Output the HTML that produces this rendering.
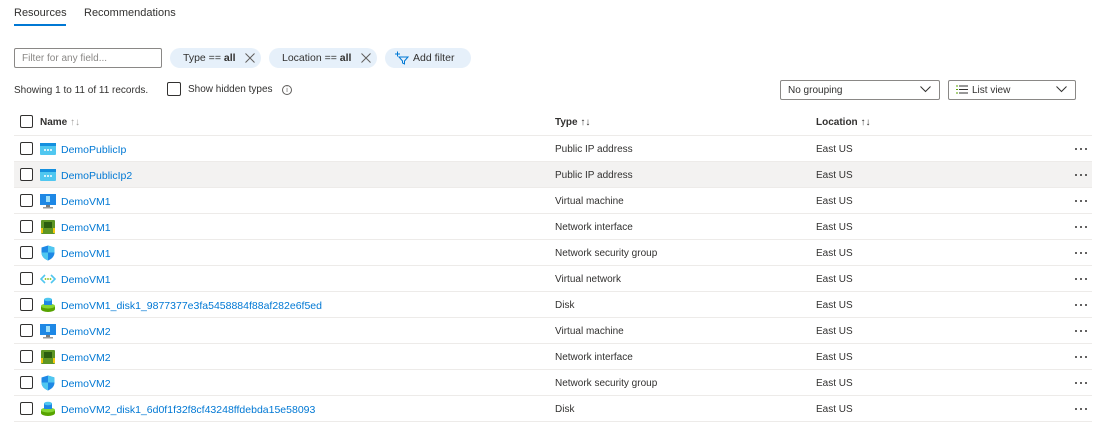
<!DOCTYPE html>
<html><head><meta charset="utf-8"><style>
*{box-sizing:border-box;margin:0;padding:0}
body{width:1096px;height:429px;background:#fff;font-family:"Liberation Sans",sans-serif;font-size:10px;color:#323130;position:relative;overflow:hidden}
.a{position:absolute;white-space:nowrap}
.cb{position:absolute;width:13px;height:13px;border:1px solid #323130;border-radius:2px;background:#fff}
.pill{position:absolute;top:48px;height:20px;border-radius:10px;background:#e6f0fa;line-height:20px;font-size:10.5px}
.row{position:absolute;left:14px;width:1078px;height:26px;border-bottom:1px solid #edebe9}
.row .cb{left:6px;top:6px}
.row .ic{position:absolute;left:26px;top:5px;width:16px;height:16px}
.row .n{position:absolute;left:47px;top:8px;color:#0078d4;font-size:10.5px}
.row .t{position:absolute;left:541px;top:8px}
.row .l{position:absolute;left:802px;top:8px}
.row .d{position:absolute;left:1061px;top:12px;width:14px;height:4px}
.row .d i{position:absolute;top:0;width:2px;height:2px;border-radius:1px;background:#323130}
.dd{position:absolute;top:80px;height:20px;border:1px solid #8a8886;border-radius:2px;line-height:19px;padding-left:7px}
</style></head><body>
<div class="a" style="left:14px;top:7px;font-size:11px;color:#323130">Resources</div>
<div class="a" style="left:14px;top:24px;width:52px;height:2px;background:#0078d4"></div>
<div class="a" style="left:84px;top:7px;font-size:11px">Recommendations</div>
<div class="a" style="left:14px;top:48px;width:148px;height:20px;border:1px solid #8a8886;border-radius:2px;color:#8a8886;padding-left:7px;line-height:19px">Filter for any field...</div>
<div class="pill" style="left:170px;width:91px;padding-left:13px">Type == <b>all</b><svg style="position:absolute;left:75px;top:5px" width="10" height="10"><path d="M0.5 0.5l9 9M9.5 0.5l-9 9" stroke="#605e5c"/></svg></div>
<div class="pill" style="left:269px;width:108px;padding-left:13px">Location == <b>all</b><svg style="position:absolute;left:92px;top:5px" width="10" height="10"><path d="M0.5 0.5l9 9M9.5 0.5l-9 9" stroke="#605e5c"/></svg></div>
<div class="pill" style="left:385px;width:86px;padding-left:28px">Add filter
<svg style="position:absolute;left:9px;top:3px" width="16" height="14" viewBox="0 0 16 14"><path d="M1 3h5M3.5 0.5v5" stroke="#0078d4" fill="none"/><path d="M5 6h9l-3.5 4v3l-2-1v-2z" stroke="#0078d4" fill="none"/></svg></div>
<div class="a" style="left:14px;top:85px">Showing 1 to 11 of 11 records.</div>
<div class="cb" style="left:167px;top:82px;width:14px;height:14px"></div>
<div class="a" style="left:188px;top:84px">Show hidden types</div>
<div class="a" style="left:282px;top:85px;width:10px;height:10px;border:1px solid #605e5c;border-radius:50%;font-size:7px;text-align:center;line-height:9px;color:#605e5c">i</div>
<div class="dd" style="left:780px;width:160px">No grouping<svg style="position:absolute;right:8px;top:5px" width="11" height="7"><path d="M0.5 0.5l5 5 5-5" stroke="#323130" fill="none"/></svg></div>
<div class="dd" style="left:948px;width:128px;padding-left:23px"><svg style="position:absolute;left:7px;top:4px" width="12" height="9"><path d="M0 1h2M0 4.5h2M0 8h2" stroke="#57a300"/><path d="M3 1h9M3 4.5h9M3 8h9" stroke="#323130"/></svg>List view<svg style="position:absolute;right:8px;top:5px" width="11" height="7"><path d="M0.5 0.5l5 5 5-5" stroke="#323130" fill="none"/></svg></div>
<div class="a" style="left:14px;top:110px;width:1078px;height:26px;border-bottom:1px solid #edebe9">
<div class="cb" style="left:6px;top:5px"></div>
<div class="a" style="left:26px;top:7px;font-weight:bold">Name <span style="font-weight:normal;color:#a19f9d">↑↓</span></div>
<div class="a" style="left:541px;top:7px;font-weight:bold">Type <span style="font-weight:normal">↑↓</span></div>
<div class="a" style="left:802px;top:7px;font-weight:bold">Location <span style="font-weight:normal">↑↓</span></div>
</div>
<div class="row" style="top:136px"><div class="cb"></div><svg class="ic" viewBox="0 0 16 16"><rect x="0" y="2" width="16" height="12" rx="1" fill="#50c7f0"/><rect x="0" y="2" width="16" height="3" fill="#1490df"/><circle cx="5" cy="9" r="1" fill="#fff"/><circle cx="8" cy="9" r="1" fill="#fff"/><circle cx="11" cy="9" r="1" fill="#fff"/></svg><div class="n">DemoPublicIp</div><div class="t">Public IP address</div><div class="l">East US</div><div class="d"><i style="left:0"></i><i style="left:5px"></i><i style="left:10px"></i></div></div>
<div class="row" style="top:162px;background:#f3f2f1"><div class="cb"></div><svg class="ic" viewBox="0 0 16 16"><rect x="0" y="2" width="16" height="12" rx="1" fill="#50c7f0"/><rect x="0" y="2" width="16" height="3" fill="#1490df"/><circle cx="5" cy="9" r="1" fill="#fff"/><circle cx="8" cy="9" r="1" fill="#fff"/><circle cx="11" cy="9" r="1" fill="#fff"/></svg><div class="n">DemoPublicIp2</div><div class="t">Public IP address</div><div class="l">East US</div><div class="d"><i style="left:0"></i><i style="left:5px"></i><i style="left:10px"></i></div></div>
<div class="row" style="top:188px"><div class="cb"></div><svg class="ic" viewBox="0 0 16 16"><rect x="0" y="1" width="16" height="11" fill="#1e88e5"/><rect x="6" y="3" width="4" height="6" fill="#9fe0fa"/><rect x="6" y="12" width="4" height="2" fill="#7a7a7a"/><rect x="3" y="14" width="10" height="1.5" fill="#999"/></svg><div class="n">DemoVM1</div><div class="t">Virtual machine</div><div class="l">East US</div><div class="d"><i style="left:0"></i><i style="left:5px"></i><i style="left:10px"></i></div></div>
<div class="row" style="top:214px"><div class="cb"></div><svg class="ic" viewBox="0 0 16 16"><rect x="1" y="1" width="14" height="14" rx="1" fill="#5e9624"/><rect x="4" y="3" width="8" height="6" fill="#2b5e0f"/><rect x="1" y="9" width="2" height="5" fill="#f2c811"/><rect x="13" y="9" width="2" height="5" fill="#f2c811"/></svg><div class="n">DemoVM1</div><div class="t">Network interface</div><div class="l">East US</div><div class="d"><i style="left:0"></i><i style="left:5px"></i><i style="left:10px"></i></div></div>
<div class="row" style="top:240px"><div class="cb"></div><svg class="ic" viewBox="0 0 16 16"><path d="M8 0.5l6.5 2v5c0 4-3 6.5-6.5 8-3.5-1.5-6.5-4-6.5-8v-5z" fill="#1e88e5"/><path d="M8 0.5l6.5 2v5H8z M8 7.5h-6.5c0 4 3 6.5 6.5 8z" fill="#50c7f0"/></svg><div class="n">DemoVM1</div><div class="t">Network security group</div><div class="l">East US</div><div class="d"><i style="left:0"></i><i style="left:5px"></i><i style="left:10px"></i></div></div>
<div class="row" style="top:266px"><div class="cb"></div><svg class="ic" viewBox="0 0 16 16"><path d="M5 4L1 8l4 4M11 4l4 4-4 4" stroke="#50c7f0" stroke-width="1.6" fill="none"/><circle cx="5.5" cy="8" r="0.9" fill="#7fba00"/><circle cx="8" cy="8" r="0.9" fill="#7fba00"/><circle cx="10.5" cy="8" r="0.9" fill="#7fba00"/></svg><div class="n">DemoVM1</div><div class="t">Virtual network</div><div class="l">East US</div><div class="d"><i style="left:0"></i><i style="left:5px"></i><i style="left:10px"></i></div></div>
<div class="row" style="top:292px"><div class="cb"></div><svg class="ic" viewBox="0 0 16 16"><ellipse cx="8" cy="12" rx="7" ry="3" fill="#57a300"/><rect x="1" y="9" width="14" height="3" fill="#57a300"/><ellipse cx="8" cy="9" rx="7" ry="2.5" fill="#86d633"/><rect x="4" y="2" width="8" height="6" fill="#1e88e5"/><ellipse cx="8" cy="2.5" rx="4" ry="1.8" fill="#50c7f0"/></svg><div class="n">DemoVM1_disk1_9877377e3fa5458884f88af282e6f5ed</div><div class="t">Disk</div><div class="l">East US</div><div class="d"><i style="left:0"></i><i style="left:5px"></i><i style="left:10px"></i></div></div>
<div class="row" style="top:318px"><div class="cb"></div><svg class="ic" viewBox="0 0 16 16"><rect x="0" y="1" width="16" height="11" fill="#1e88e5"/><rect x="6" y="3" width="4" height="6" fill="#9fe0fa"/><rect x="6" y="12" width="4" height="2" fill="#7a7a7a"/><rect x="3" y="14" width="10" height="1.5" fill="#999"/></svg><div class="n">DemoVM2</div><div class="t">Virtual machine</div><div class="l">East US</div><div class="d"><i style="left:0"></i><i style="left:5px"></i><i style="left:10px"></i></div></div>
<div class="row" style="top:344px"><div class="cb"></div><svg class="ic" viewBox="0 0 16 16"><rect x="1" y="1" width="14" height="14" rx="1" fill="#5e9624"/><rect x="4" y="3" width="8" height="6" fill="#2b5e0f"/><rect x="1" y="9" width="2" height="5" fill="#f2c811"/><rect x="13" y="9" width="2" height="5" fill="#f2c811"/></svg><div class="n">DemoVM2</div><div class="t">Network interface</div><div class="l">East US</div><div class="d"><i style="left:0"></i><i style="left:5px"></i><i style="left:10px"></i></div></div>
<div class="row" style="top:370px"><div class="cb"></div><svg class="ic" viewBox="0 0 16 16"><path d="M8 0.5l6.5 2v5c0 4-3 6.5-6.5 8-3.5-1.5-6.5-4-6.5-8v-5z" fill="#1e88e5"/><path d="M8 0.5l6.5 2v5H8z M8 7.5h-6.5c0 4 3 6.5 6.5 8z" fill="#50c7f0"/></svg><div class="n">DemoVM2</div><div class="t">Network security group</div><div class="l">East US</div><div class="d"><i style="left:0"></i><i style="left:5px"></i><i style="left:10px"></i></div></div>
<div class="row" style="top:396px"><div class="cb"></div><svg class="ic" viewBox="0 0 16 16"><ellipse cx="8" cy="12" rx="7" ry="3" fill="#57a300"/><rect x="1" y="9" width="14" height="3" fill="#57a300"/><ellipse cx="8" cy="9" rx="7" ry="2.5" fill="#86d633"/><rect x="4" y="2" width="8" height="6" fill="#1e88e5"/><ellipse cx="8" cy="2.5" rx="4" ry="1.8" fill="#50c7f0"/></svg><div class="n">DemoVM2_disk1_6d0f1f32f8cf43248ffdebda15e58093</div><div class="t">Disk</div><div class="l">East US</div><div class="d"><i style="left:0"></i><i style="left:5px"></i><i style="left:10px"></i></div></div>
</body></html>
